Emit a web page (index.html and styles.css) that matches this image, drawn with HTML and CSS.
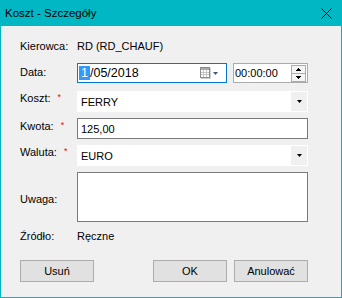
FILE: index.html
```html
<!DOCTYPE html>
<html lang="pl">
<head>
<meta charset="utf-8">
<title>Koszt - Szczegóły</title>
<link rel="stylesheet" href="styles.css">
</head>
<body>
<div class="window">
  <div class="titlebar">
    <span class="title">Koszt - Szczegóły</span>
    <svg class="close" width="11" height="11" viewBox="0 0 11 11">
      <path d="M0.5 0.5 L10.5 10.5 M10.5 0.5 L0.5 10.5" stroke="#000" stroke-width="1" fill="none"/>
    </svg>
  </div>
  <div class="client">
    <div class="row r-driver">
      <div class="label">Kierowca:</div>
      <div class="value">RD (RD_CHAUF)</div>
    </div>
    <div class="row r-date">
      <div class="label lp3">Data:</div>
      <div class="date">
        <span class="date-text"><span class="sel">1</span>/05/2018</span>
        <svg class="cal" width="11" height="12" viewBox="0 0 11 12">
          <rect x="0.5" y="0.5" width="9" height="10" fill="#ffffff" stroke="#8c8c8c"/>
          <rect x="1" y="1" width="8" height="2" fill="#a8a8a8"/>
          <path d="M3.5 3 V10 M6.5 3 V10 M1 5.5 H9 M1 7.5 H9" stroke="#c4c4c4" stroke-width="1"/>
          <rect x="10" y="1" width="1" height="11" fill="#cfcfcf"/>
          <rect x="1" y="11" width="10" height="1" fill="#cfcfcf"/>
        </svg>
        <svg class="dd" width="5" height="3" viewBox="0 0 5 3">
          <polygon points="0,0 5,0 2.5,3" fill="#44587a"/>
        </svg>
      </div>
      <div class="time">
        <span class="time-text">00:00:00</span>
        <svg class="spin" width="15" height="17" viewBox="0 0 15 17">
          <rect x="0.5" y="0.5" width="14" height="16" fill="#f4f4f4" stroke="#acacac"/>
          <path d="M1 8.5 H14" stroke="#acacac"/>
          <rect x="7" y="3" width="1" height="1" fill="#000"/>
          <rect x="6" y="4" width="3" height="1" fill="#000"/>
          <rect x="5" y="5" width="5" height="1" fill="#000"/>
          <rect x="5" y="11" width="5" height="1" fill="#000"/>
          <rect x="6" y="12" width="3" height="1" fill="#000"/>
          <rect x="7" y="13" width="1" height="1" fill="#000"/>
        </svg>
      </div>
    </div>
    <div class="row r-field r-koszt">
      <div class="label lp1">Koszt:<span class="req">*</span></div>
      <div class="combo">
        <span class="combo-text">FERRY</span>
        <span class="combo-btn">
          <svg width="5" height="3" viewBox="0 0 5 3"><polygon points="0,0 5,0 2.5,3" fill="#000"/></svg>
        </span>
      </div>
    </div>
    <div class="row r-field">
      <div class="label lp2">Kwota:<span class="req">*</span></div>
      <div class="textbox"><span class="tb-text">125,00</span></div>
    </div>
    <div class="row r-field">
      <div class="label lp1">Waluta:<span class="req">*</span></div>
      <div class="combo">
        <span class="combo-text">EURO</span>
        <span class="combo-btn">
          <svg width="5" height="3" viewBox="0 0 5 3"><polygon points="0,0 5,0 2.5,3" fill="#000"/></svg>
        </span>
      </div>
    </div>
    <div class="row r-note">
      <div class="label lp21">Uwaga:</div>
      <div class="textarea"></div>
    </div>
    <div class="row r-source">
      <div class="label">Źródło:</div>
      <div class="value">Ręczne</div>
    </div>
    <div class="buttons">
      <button class="btn">Usuń</button>
      <button class="btn btn-ok">OK</button>
      <button class="btn">Anulować</button>
    </div>
  </div>
</div>
</body>
</html>
```
FILE: styles.css
```css
* { box-sizing: border-box; }
html, body { margin: 0; padding: 0; }
body {
  width: 342px;
  height: 298px;
  font-family: "Liberation Sans", Arial, sans-serif;
  font-size: 11px;
  color: #000;
  background: #fff;
}
.window {
  width: 342px;
  height: 298px;
  background: #00b7c3;
  padding: 0 1px 1px 1px;
  display: flex;
  flex-direction: column;
}
.titlebar {
  height: 26px;
  flex: none;
  display: flex;
  align-items: center;
  justify-content: space-between;
  padding: 0 9px 0 4px;
}
.title { font-size: 11.5px; line-height: 14px; }
.close { display: block; }
.client {
  flex: 1;
  background: #f0f0f0;
  padding: 14px 33px 0 19px;
  display: flex;
  flex-direction: column;
}
.row { display: flex; align-items: flex-start; flex: none; }
.label {
  width: 57px;
  flex: none;
  line-height: 13px;
  display: flex;
  white-space: nowrap;
}
.lp1 { padding-top: 1px; }
.lp2 { padding-top: 2px; }
.lp3 { padding-top: 3px; }
.lp21 { padding-top: 21px; }
.req {
  color: #ff0000;
  margin-left: 7px;
  font-size: 9px;
  line-height: 9px;
  padding-top: 1px;
}
.value { line-height: 13px; }
.r-driver { height: 13px; }
.r-date { margin-top: 10px; height: 20px; }
.r-field { margin-top: 6px; height: 21px; }
.r-koszt { margin-top: 8px; }
.r-note { margin-top: 6px; height: 50px; }
.r-source { margin-top: 8px; height: 13px; }

.date {
  width: 150px;
  height: 20px;
  border: 1px solid #0078d7;
  background: #fff;
  display: flex;
  align-items: center;
  padding: 0 8px 0 1px;
}
.date-text { font-size: 12.5px; line-height: 14px; white-space: nowrap; }
.sel {
  display: inline-block;
  background: #3399ff;
  color: #fff;
  padding: 0 2px;
}
.cal { margin-left: auto; display: block; }
.dd { margin-left: 2px; display: block; }

.time {
  width: 75px;
  height: 20px;
  margin-left: 6px;
  border: 1px solid #ababab;
  background: #fff;
  display: flex;
  align-items: center;
  justify-content: space-between;
  padding: 0 1px 0 1px;
}
.time-text { line-height: 13px; }
.spin { display: block; }

.combo {
  width: 231px;
  height: 21px;
  background: #fff;
  display: flex;
  align-items: stretch;
  padding: 1px;
}
.combo-text {
  flex: 1;
  padding-left: 3px;
  display: flex;
  align-items: center;
}
.combo-btn {
  width: 16px;
  background: #f0f0f0;
  display: flex;
  align-items: center;
  justify-content: center;
}
.combo-btn svg { display: block; }

.textbox {
  width: 231px;
  height: 21px;
  border: 1px solid #7a7a7a;
  background: #fff;
  display: flex;
  align-items: center;
  padding-left: 3px;
}
.textarea {
  width: 231px;
  height: 50px;
  border: 1px solid #7a7a7a;
  background: #fff;
}

.buttons {
  margin-top: 17px;
  display: flex;
  height: 22px;
}
.btn {
  width: 74px;
  height: 22px;
  margin: 0;
  padding: 0;
  border: 1px solid #adadad;
  background: #e1e1e1;
  font-family: "Liberation Sans", Arial, sans-serif;
  font-size: 11px;
  color: #000;
}
.btn-ok { margin-left: auto; margin-right: 7px; }
```
